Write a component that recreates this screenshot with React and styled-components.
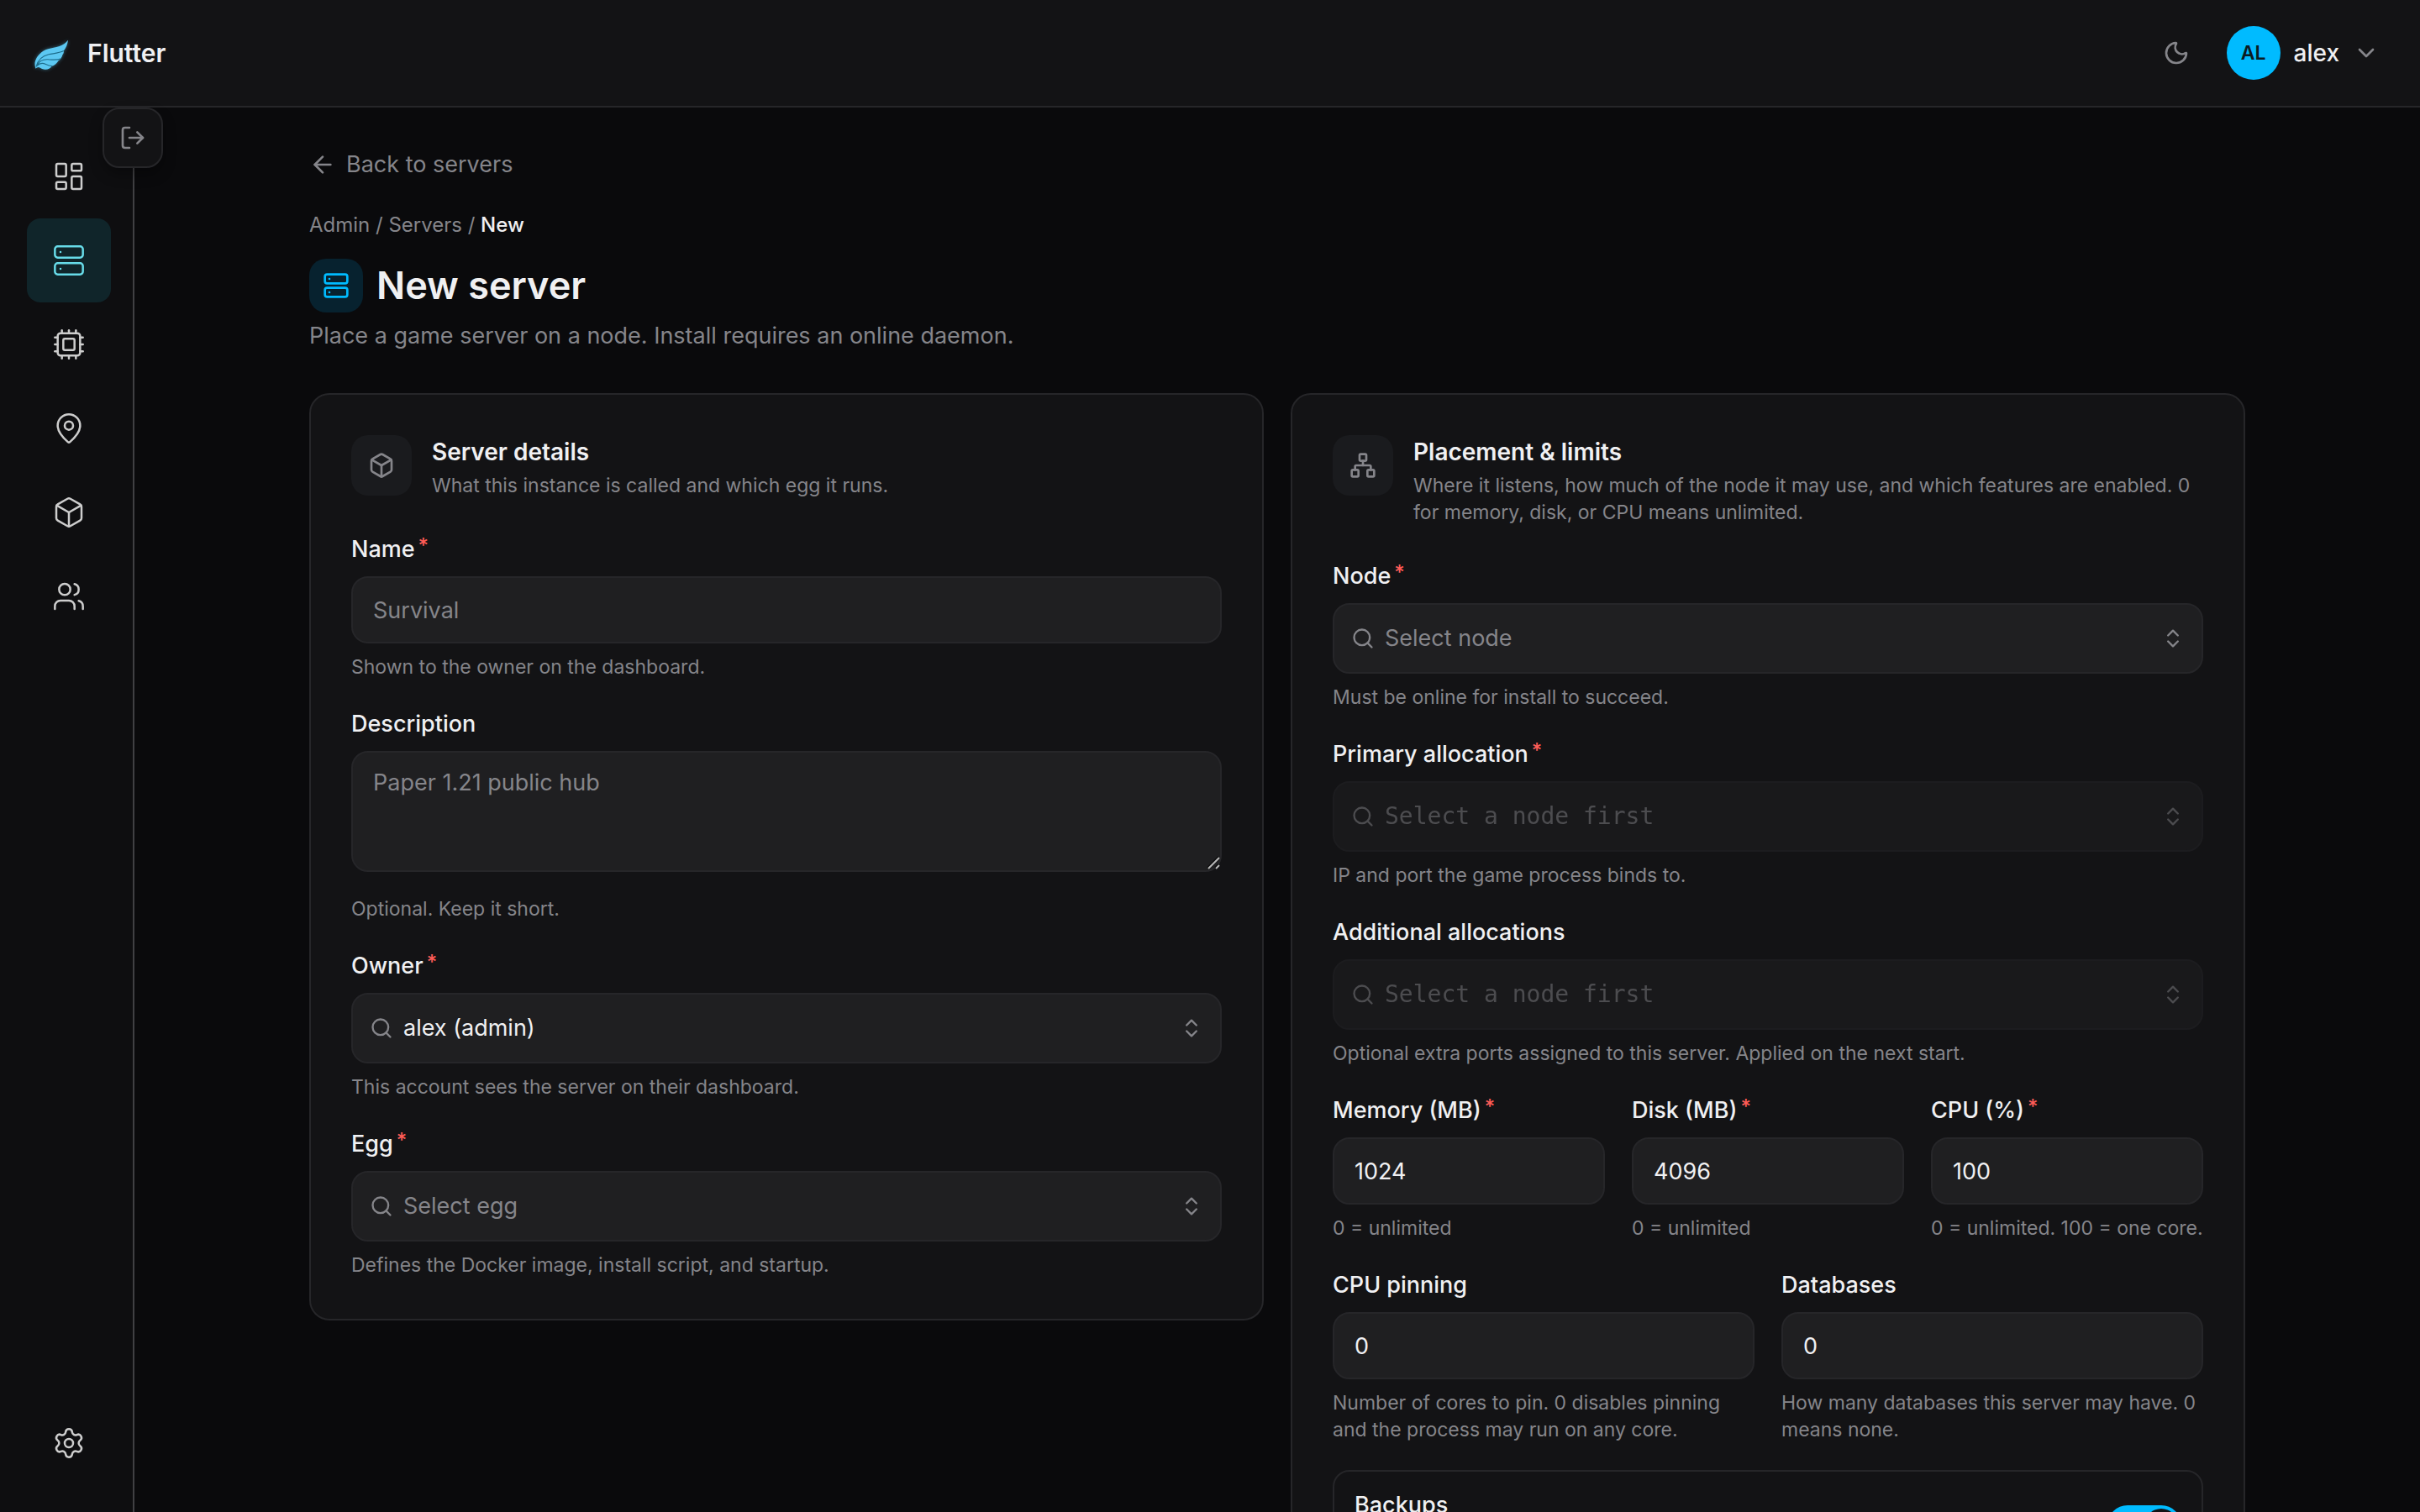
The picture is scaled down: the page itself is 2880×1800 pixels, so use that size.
import { useState } from "react";
import styled, { createGlobalStyle, css } from "styled-components";
import {
    ArrowLeft,
    Box,
    ChevronDown,
    ChevronsUpDown,
    Cpu,
    LayoutDashboard,
    LogOut,
    MapPin,
    Moon,
    Network,
    Search,
    Server,
    Settings,
    Users
} from "lucide-react";

const GlobalStyle = createGlobalStyle`
    :root {
        --bg: #0a0a0c;
        --sidebar: #0e0e10;
        --surface: #131315;
        --field: #1f1f21;
        --tile: #1a1b1e;
        --border: #262629;
        --text: #f0f0f2;
        --muted: #85858a;
        --accent: #00bbff;
        --danger: #ff5c57;
        --sans: Inter, "Liberation Sans", sans-serif;
        --mono: "DejaVu Sans Mono", "Liberation Mono", monospace;
    }

    * {
        box-sizing: border-box;
    }

    body {
        margin: 0;
        background: var(--bg);
        color: var(--text);
        font-family: var(--sans);
        font-size: 27px;
        line-height: 40px;
        -webkit-font-smoothing: antialiased;
    }

    button, input, select, textarea {
        font: inherit;
        color: inherit;
    }

    h1, h2, p {
        margin: 0;
    }

    a {
        color: inherit;
        text-decoration: none;
    }

    svg {
        display: block;
        flex-shrink: 0;
    }
`;

const Shell = styled.div`
    display: flex;
    flex-direction: column;
    height: 100vh;
`;

const Header = styled.header`
    display: flex;
    align-items: center;
    justify-content: space-between;
    flex-shrink: 0;
    height: 128px;
    padding: 0 48px 0 40px;
    background: var(--surface);
    border-bottom: 2px solid var(--border);
`;

const Brand = styled.a`
    display: flex;
    align-items: center;
    gap: 20px;
    font-size: 30px;
    font-weight: 600;

    & svg {
        filter: drop-shadow(0 0 2px rgba(92, 200, 242, .45));
    }
`;

const HeaderTools = styled.div`
    display: flex;
    align-items: center;
    gap: 44px;
`;

const IconButton = styled.button`
    display: flex;
    padding: 0;
    background: none;
    border: 0;
    color: var(--muted);
    cursor: pointer;
`;

const UserButton = styled.button`
    display: flex;
    align-items: center;
    gap: 16px;
    padding: 0;
    background: none;
    border: 0;
    font-size: 28px;
    font-weight: 500;
    cursor: pointer;

    & svg {
        color: var(--muted);
    }
`;

const Avatar = styled.span`
    display: flex;
    align-items: center;
    justify-content: center;
    width: 64px;
    height: 64px;
    border-radius: 50%;
    background: var(--accent);
    color: #0b1a22;
    font-size: 23px;
    font-weight: 600;
`;

const Body = styled.div`
    display: flex;
    flex: 1;
    min-height: 0;
`;

const Sidebar = styled.aside`
    position: relative;
    display: flex;
    flex-direction: column;
    justify-content: space-between;
    flex-shrink: 0;
    width: 160px;
    padding: 32px 26px 32px 32px;
    background: var(--sidebar);
    border-right: 2px solid #404043;
`;

const ExpandButton = styled.button`
    position: absolute;
    top: 0;
    right: -36px;
    display: flex;
    align-items: center;
    justify-content: center;
    width: 72px;
    height: 72px;
    padding: 0;
    background: var(--surface);
    border: 2px solid var(--border);
    border-radius: 20px;
    box-shadow: 0 8px 16px rgba(0, 0, 0, .3);
    color: var(--muted);
    cursor: pointer;
`;

const NavItem = styled.a`
    display: flex;
    align-items: center;
    justify-content: center;
    height: 100px;
    border-radius: 16px;
    color: #cdcdcd;

    ${({ $active }) => $active && css`
        background: #10252a;
        color: #67dbe8;
    `}
`;

const Main = styled.main`
    flex: 1;
    min-width: 0;
    padding: 48px 64px;
    overflow-y: auto;
    scrollbar-width: none;
`;

const Content = styled.div`
    max-width: 2304px;
    margin: 0 auto;
`;

const BackLink = styled.a`
    display: flex;
    align-items: center;
    gap: 12px;
    width: fit-content;
    color: var(--muted);
`;

const Breadcrumb = styled.nav`
    margin-top: 36px;
    color: var(--muted);
    font-size: 24px;
    line-height: 32px;

    & span {
        color: var(--text);
        font-weight: 500;
    }
`;

const PageTitle = styled.div`
    display: flex;
    align-items: center;
    gap: 16px;
    margin-top: 24px;

    & h1 {
        font-size: 45px;
        font-weight: 600;
        line-height: 64px;
    }
`;

const Tile = styled.span`
    display: flex;
    align-items: center;
    justify-content: center;
    flex-shrink: 0;
    width: ${({ $accent }) => ($accent ? 64 : 72)}px;
    height: ${({ $accent }) => ($accent ? 64 : 72)}px;
    border-radius: 20px;
    background: ${({ $accent }) => ($accent ? "#07222f" : "var(--tile)")};
    color: ${({ $accent }) => ($accent ? "var(--accent)" : "var(--muted)")};
`;

const Lead = styled.p`
    margin-top: 8px;
    color: var(--muted);
`;

const Columns = styled.form`
    display: grid;
    grid-template-columns: 1fr 1fr;
    align-items: start;
    gap: 32px;
    margin-top: 48px;
`;

const Card = styled.section`
    display: flex;
    flex-direction: column;
    gap: 32px;
    padding: 48px;
    background: var(--surface);
    border: 2px solid var(--border);
    border-radius: 24px;
`;

const CardHead = styled.header`
    display: flex;
    gap: 24px;
    margin-bottom: 8px;

    & h2 {
        font-size: 28px;
        font-weight: 600;
        line-height: 40px;
    }

    & p {
        margin-top: 4px;
        color: var(--muted);
        font-size: 23px;
        line-height: 32px;
    }
`;

const FieldBox = styled.div`
    display: flex;
    flex-direction: column;
    gap: 12px;
    min-width: 0;
`;

const Label = styled.label`
    display: flex;
    align-items: flex-start;
    gap: 4px;
    font-weight: 500;
`;

const Required = styled.span`
    color: var(--danger);
    font-size: 24px;
    line-height: 32px;
`;

const Hint = styled.p`
    color: var(--muted);
    font-size: 23px;
    line-height: 32px;
`;

const field = css`
    width: 100%;
    background: var(--field);
    border: 2px solid var(--border);
    border-radius: 20px;
`;

const TextInput = styled.input`
    ${field}
    height: 80px;
    padding: 0 24px;

    &::placeholder {
        color: var(--muted);
    }
`;

const TextAreaBox = styled.div`
    position: relative;
    margin-bottom: 16px;

    & svg {
        position: absolute;
        right: 0;
        bottom: 0;
        pointer-events: none;
    }
`;

const TextArea = styled.textarea`
    ${field}
    display: block;
    height: 144px;
    padding: 16px 24px;
    resize: vertical;

    &::placeholder {
        color: var(--muted);
    }

    &::-webkit-resizer {
        background: none;
    }
`;

const SelectBox = styled.div`
    ${field}
    display: flex;
    align-items: center;
    gap: 12px;
    height: 84px;
    padding: 0 20px;
    color: var(--muted);
    opacity: ${({ $disabled }) => ($disabled ? .5 : 1)};

    & select {
        flex: 1;
        min-width: 0;
        height: 100%;
        padding: 0;
        appearance: none;
        background: none;
        border: 0;
        outline: 0;
        color: ${({ $filled }) => ($filled ? "var(--text)" : "var(--muted)")};
        font-family: ${({ $disabled }) => ($disabled ? "var(--mono)" : "var(--sans)")};
        font-size: ${({ $disabled }) => ($disabled ? 28 : 27)}px;
        opacity: 1;
    }
`;

const Row = styled.div`
    display: grid;
    grid-template-columns: repeat(${({ $cols }) => $cols}, minmax(0, 1fr));
    gap: 32px;
`;

const SwitchRow = styled.div`
    display: flex;
    justify-content: space-between;
    min-height: 132px;
    padding: 20px 24px;
    border: 2px solid var(--border);
    border-radius: 20px;
`;

const Switch = styled.input`
    display: flex;
    align-items: center;
    align-self: center;
    width: 88px;
    height: 48px;
    margin: 0;
    padding: 4px;
    appearance: none;
    border-radius: 24px;
    background: var(--field);
    cursor: pointer;

    &::before {
        content: "";
        width: 40px;
        height: 40px;
        border-radius: 50%;
        background: var(--surface);
    }

    &:checked {
        justify-content: flex-end;
        background: var(--accent);
    }
`;

const nav = [
    { icon: LayoutDashboard, label: "Dashboard" },
    { icon: Server, label: "Servers", active: true },
    { icon: Cpu, label: "Nodes" },
    { icon: MapPin, label: "Locations" },
    { icon: Box, label: "Eggs" },
    { icon: Users, label: "Users" }
];

function Wing() {
    return (
        <svg width="44" height="44" viewBox="0 0 44 44" fill="none" aria-hidden="true">
            <path
                d="M41 6.7C38 10.5 35 12.5 30.7 14C26 15.6 21.5 16 17.3 17.3C13 18.6 9.5 20.5 7 23.5C3 27.5 1.5 32 1.5 35C1.5 37.5 2 39.5 2.7 40.8C3.5 39.5 4.5 38.8 6 38.9C8 39 9 41 12 41.5C16 42.2 19 41.5 22 37.5C25 37 28 34 29.5 31.2C32 30 34 26.5 34.5 24C36 22.5 36 20.5 35.8 19.5C38.5 16 40.5 11.5 41 6.7Z"
                fill="#5cc8f2"
            />
            <path
                d="M3 38.5C5 30.5 10.5 25.5 18 23.8C24 22.5 30 22.3 35.8 19.5M4.5 36.5C7 31 11 29.5 17 29.8C23 30.2 28 30.8 32 29M4 37.5C7 34 11 33.8 14.5 35.5C17.5 37 20 37.7 22 37.5"
                stroke="#1d6d8c"
                strokeWidth="1.1"
            />
        </svg>
    );
}

function ResizeGrip() {
    return (
        <svg width="20" height="20" viewBox="0 0 20 20" fill="none" aria-hidden="true">
            <path d="M3 15L16 2M12 15L16 11" stroke="#0c0c0d" strokeWidth="2" />
            <path d="M4 16L17 3M13 16L17 12" stroke="#b8b8b8" strokeWidth="2" />
        </svg>
    );
}

function NavLink({ icon: Icon, label, active }) {
    return (
        <NavItem href="#" $active={active} aria-label={label}>
            <Icon size={40} strokeWidth={1.5} />
        </NavItem>
    );
}

function Field({ id, label, required, hint, children }) {
    return (
        <FieldBox>
            <Label htmlFor={id}>
                {label}
                {required && <Required>*</Required>}
            </Label>
            {children}
            <Hint>{hint}</Hint>
        </FieldBox>
    );
}

function SelectField({ id, text, filled, disabled, ...rest }) {
    return (
        <Field id={id} {...rest}>
            <SelectBox $filled={filled} $disabled={disabled}>
                <Search size={28} />
                <select id={id} disabled={disabled}>
                    <option>{text}</option>
                </select>
                <ChevronsUpDown size={28} />
            </SelectBox>
        </Field>
    );
}

function InputField({ id, value = "", placeholder, ...rest }) {
    const [val, setVal] = useState(value);

    return (
        <Field id={id} {...rest}>
            <TextInput
                id={id}
                type="text"
                value={val}
                placeholder={placeholder}
                onChange={e => setVal(e.target.value)}
            />
        </Field>
    );
}

export default function App() {
    const [backups, setBackups] = useState(true);

    return (
        <Shell>
            <GlobalStyle />
            <Header>
                <Brand href="#">
                    <Wing />
                    Flutter
                </Brand>
                <HeaderTools>
                    <IconButton type="button" aria-label="Toggle theme">
                        <Moon size={32} />
                    </IconButton>
                    <UserButton type="button">
                        <Avatar>AL</Avatar>
                        alex
                        <ChevronDown size={32} />
                    </UserButton>
                </HeaderTools>
            </Header>

            <Body>
                <Sidebar>
                    <nav>
                        {nav.map(item => <NavLink key={item.label} {...item} />)}
                    </nav>
                    <NavLink icon={Settings} label="Settings" />
                    <ExpandButton type="button" aria-label="Expand sidebar">
                        <LogOut size={32} />
                    </ExpandButton>
                </Sidebar>

                <Main>
                    <Content>
                        <BackLink href="#">
                            <ArrowLeft size={32} />
                            Back to servers
                        </BackLink>
                        <Breadcrumb>
                            <a href="#">Admin</a> / <a href="#">Servers</a> / <span>New</span>
                        </Breadcrumb>
                        <PageTitle>
                            <Tile $accent><Server size={32} /></Tile>
                            <h1>New server</h1>
                        </PageTitle>
                        <Lead>Place a game server on a node. Install requires an online daemon.</Lead>

                        <Columns>
                            <Card>
                                <CardHead>
                                    <Tile><Box size={32} /></Tile>
                                    <div>
                                        <h2>Server details</h2>
                                        <p>What this instance is called and which egg it runs.</p>
                                    </div>
                                </CardHead>
                                <InputField
                                    id="name"
                                    label="Name"
                                    required
                                    placeholder="Survival"
                                    hint="Shown to the owner on the dashboard."
                                />
                                <Field id="description" label="Description" hint="Optional. Keep it short.">
                                    <TextAreaBox>
                                        <TextArea id="description" placeholder="Paper 1.21 public hub" />
                                        <ResizeGrip />
                                    </TextAreaBox>
                                </Field>
                                <SelectField
                                    id="owner"
                                    label="Owner"
                                    required
                                    filled
                                    text="alex (admin)"
                                    hint="This account sees the server on their dashboard."
                                />
                                <SelectField
                                    id="egg"
                                    label="Egg"
                                    required
                                    text="Select egg"
                                    hint="Defines the Docker image, install script, and startup."
                                />
                            </Card>

                            <Card>
                                <CardHead>
                                    <Tile><Network size={32} /></Tile>
                                    <div>
                                        <h2>Placement &amp; limits</h2>
                                        <p>
                                            Where it listens, how much of the node it may use, and which
                                            features are enabled. 0 for memory, disk, or CPU means unlimited.
                                        </p>
                                    </div>
                                </CardHead>
                                <SelectField
                                    id="node"
                                    label="Node"
                                    required
                                    text="Select node"
                                    hint="Must be online for install to succeed."
                                />
                                <SelectField
                                    id="allocation"
                                    label="Primary allocation"
                                    required
                                    disabled
                                    text="Select a node first"
                                    hint="IP and port the game process binds to."
                                />
                                <SelectField
                                    id="extra"
                                    label="Additional allocations"
                                    disabled
                                    text="Select a node first"
                                    hint="Optional extra ports assigned to this server. Applied on the next start."
                                />
                                <Row $cols={3}>
                                    <InputField id="memory" label="Memory (MB)" required value="1024" hint="0 = unlimited" />
                                    <InputField id="disk" label="Disk (MB)" required value="4096" hint="0 = unlimited" />
                                    <InputField id="cpu" label="CPU (%)" required value="100" hint="0 = unlimited. 100 = one core." />
                                </Row>
                                <Row $cols={2}>
                                    <InputField
                                        id="pinning"
                                        label="CPU pinning"
                                        value="0"
                                        hint="Number of cores to pin. 0 disables pinning and the process may run on any core."
                                    />
                                    <InputField
                                        id="databases"
                                        label="Databases"
                                        value="0"
                                        hint="How many databases this server may have. 0 means none."
                                    />
                                </Row>
                                <SwitchRow>
                                    <Label htmlFor="backups">Backups</Label>
                                    <Switch
                                        id="backups"
                                        type="checkbox"
                                        role="switch"
                                        checked={backups}
                                        onChange={e => setBackups(e.target.checked)}
                                    />
                                </SwitchRow>
                            </Card>
                        </Columns>
                    </Content>
                </Main>
            </Body>
        </Shell>
    );
}
